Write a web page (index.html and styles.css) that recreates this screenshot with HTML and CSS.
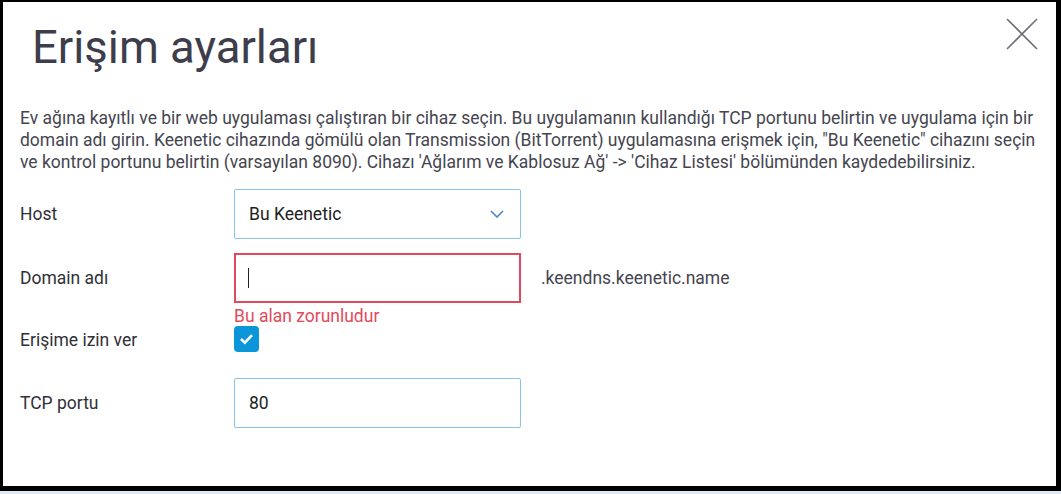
FILE: index.html
```html
<!doctype html>
<html lang="tr">
<head>
    <meta charset="UTF-8">
    <title>Erişim ayarları</title>
    <link rel="stylesheet" href="styles.css">
</head>
<body>

<div class="dialog">
    <div class="dialog-head">
        <h1 class="dialog-title">Erişim ayarları</h1>
        <span class="dialog-close">
            <svg width="32" height="32" viewBox="0 0 32 32">
                <path d="M1 1 L31 31 M31 1 L1 31" stroke="#6f6f78" stroke-width="1.6" fill="none"/>
            </svg>
        </span>
    </div>

    <p class="dialog-text">Ev ağına kayıtlı ve bir web uygulaması çalıştıran bir cihaz seçin. Bu uygulamanın kullandığı TCP portunu belirtin ve uygulama için bir domain adı girin. Keenetic cihazında gömülü olan Transmission (BitTorrent) uygulamasına erişmek için, "Bu Keenetic" cihazını seçin ve kontrol portunu belirtin (varsayılan 8090). Cihazı 'Ağlarım ve Kablosuz Ağ' -&gt; 'Cihaz Listesi' bölümünden kaydedebilirsiniz.</p>

    <div class="form">
        <div class="row row-host">
            <label class="row-label">Host</label>
            <div class="field select">
                <span>Bu Keenetic</span>
                <svg class="chevron" width="14" height="8" viewBox="0 0 14 8">
                    <path d="M1 1 L7 7 L13 1" stroke="#4a86c8" stroke-width="1.6" fill="none"/>
                </svg>
            </div>
        </div>

        <div class="row row-domain">
            <label class="row-label">Domain adı</label>
            <div class="field field-error"><span class="caret"></span></div>
            <span class="suffix">.keendns.keenetic.name</span>
        </div>
        <div class="error-text">Bu alan zorunludur</div>

        <div class="row row-check">
            <label class="row-label">Erişime izin ver</label>
            <span class="checkbox">
                <svg width="15" height="12" viewBox="0 0 15 12">
                    <path d="M2 6 L5.8 9.6 L13 2.2" stroke="#fff" stroke-width="2.6" fill="none"/>
                </svg>
            </span>
        </div>

        <div class="row row-port">
            <label class="row-label">TCP portu</label>
            <div class="field"><span>80</span></div>
        </div>
    </div>
</div>

</body>
</html>
```

FILE: styles.css
```css
*{margin:0;padding:0;box-sizing:border-box;}
body{
    background:#dfe9f5;
    font-family:Roboto,"Liberation Sans",sans-serif;
    color:#2a2a2e;
}
.dialog{
    width:1061px;
    height:491px;
    background:#fff;
    border-style:solid;
    border-color:#000;
    border-width:2px 5px 5px 3px;
    padding:18px 17px;
}
.dialog-head{
    display:flex;
    justify-content:space-between;
    align-items:flex-start;
}
.dialog-title{
    font-size:45.5px;
    font-weight:400;
    line-height:55px;
    color:#3d3d4c;
    padding-left:12px;
}
.dialog-close{
    display:block;
    width:32px;
    height:32px;
    margin-top:-2px;
    margin-right:1px;
}
.dialog-text{
    margin-top:32px;
    font-size:17.5px;
    line-height:22px;
    color:#45454f;
}
.form{
    margin-top:16px;
}
.row{
    display:flex;
    align-items:center;
}
.row-label{
    width:214px;
    font-size:17.5px;
    color:#303036;
}
.field{
    width:287px;
    height:50px;
    border:1px solid #86c5e8;
    border-radius:2px;
    padding:0 14px;
    display:flex;
    align-items:center;
    justify-content:space-between;
    font-size:17.5px;
    color:#222;
}
.field-error{
    border:2px solid #e4495b;
    border-radius:0;
    padding:0 12px;
}
.chevron{
    margin-right:2px;
}
.caret{
    display:block;
    width:1px;
    height:20px;
    background:#222;
}
.row-domain{
    margin-top:14px;
}
.suffix{
    margin-left:20px;
    font-size:17.5px;
    color:#45454f;
}
.error-text{
    margin-left:214px;
    margin-top:2px;
    font-size:17.5px;
    line-height:22px;
    color:#e4495b;
}
.row-check{
    height:30px;
    margin-top:-2px;
}
.checkbox{
    display:flex;
    align-items:center;
    justify-content:center;
    width:25px;
    height:26px;
    border-radius:4px;
    background:#0a96d9;
    margin-top:-2px;
}
.row-port{
    margin-top:23px;
}
```
